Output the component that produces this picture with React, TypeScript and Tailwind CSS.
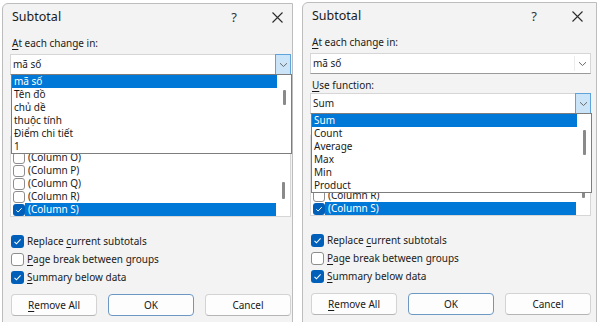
import React from "react";

const FONT = "font-['Noto_Sans',sans-serif]";

function Chevron() {
  return (
    <svg width="9" height="6" viewBox="0 0 9 6">
      <path d="M1 1.2l3.5 3.3L8 1.2" stroke="#6b6b6b" fill="none" strokeWidth="1" />
    </svg>
  );
}

function CloseIcon() {
  return (
    <svg width="11" height="11" viewBox="0 0 11 11">
      <path d="M0.5 0.5l10 10M10.5 0.5l-10 10" stroke="#2b2b2b" strokeWidth="1.1" />
    </svg>
  );
}

function Check({ size = 13 }: { size?: number }) {
  return (
    <svg width={size - 4} height={size - 4} viewBox="0 0 9 9">
      <path d="M1.5 4.8l2 2L7.6 2.4" stroke="#fff" fill="none" strokeWidth="1.1" />
    </svg>
  );
}

function Box({ checked, small }: { checked?: boolean; small?: boolean }) {
  const size = small ? "w-[12px] h-[12px]" : "w-[13px] h-[13px]";
  return checked ? (
    <span className={`${size} shrink-0 rounded-[3px] bg-[#005fb8] flex items-center justify-center`}>
      <Check size={small ? 12 : 13} />
    </span>
  ) : (
    <span className={`${size} shrink-0 rounded-[3px] bg-white border border-[#8d8d8d]`} />
  );
}

function DropList({ items, thumbTop, thumbH }: { items: string[]; thumbTop: string; thumbH: string }) {
  return (
    <div className="absolute top-full left-0 z-10 w-[281px] h-[80px] bg-white border border-[#7d7d7d] flex">
      <div className="w-[265px] flex flex-col">
        {items.map((it, i) => (
          <div
            key={it}
            className={`h-[13px] leading-[13px] pl-[2px] text-[10px] ${
              i === 0 ? "bg-[#0078d7] text-white" : "text-[#1a1a1a]"
            }`}
          >
            {it}
          </div>
        ))}
      </div>
      <div className={`flex-1 pl-[6px] ${thumbTop}`}>
        <div className={`w-[3px] ${thumbH} rounded-[1px] bg-[#8a8a8a]`} />
      </div>
    </div>
  );
}

function Combo({
  value,
  open,
  hidden,
  list,
}: {
  value: string;
  open?: boolean;
  hidden?: boolean;
  list?: React.ReactNode;
}) {
  return (
    <div className={`relative w-[281px] h-[21px] bg-white border border-[#d6d6d6] border-b-[#9a9a9a] flex ${hidden ? "invisible" : ""}`}>
      <div className="flex-1 pl-[2px] leading-[19px] text-[10px] text-[#1a1a1a]">{value}</div>
      {open ? (
        <div className="w-[16px] -my-px -mr-px bg-[#cce4f7] border border-[#5ea3dc] flex items-center justify-center">
          <Chevron />
        </div>
      ) : (
        <div className="w-[16px] my-[2px] border-l border-[#ececec] flex items-center justify-center">
          <Chevron />
        </div>
      )}
      {list}
    </div>
  );
}

const columns = ["(Column O)", "(Column P)", "(Column Q)", "(Column R)", "(Column S)"];

function Dialog({ width, shift, openFirst }: { width: string; shift: string; openFirst: boolean }) {
  // rows of the column list that sit under the open drop-down are not drawn
  const coveredRows = openFirst ? 0 : 3;
  return (
    <div className={`${width} ${shift} h-[330px] shrink-0 overflow-hidden bg-[#f3f3f3] border border-[#bdbdbd] rounded-tl-[6px]`}>
      <div className="w-[293px] flex flex-col pl-[7px]">
        {/* title bar */}
        <div className="h-[27px] -ml-[7px] pl-[9px] flex items-center">
          <span className="flex-1 text-[12.5px] text-[#1a1a1a]">Subtotal</span>
          <span className="w-[30px] text-center text-[13px] text-[#333]">?</span>
          <span className="w-[30px] ml-[13px] mr-[4px] flex justify-center">
            <CloseIcon />
          </span>
        </div>

        <div className="mt-[5px] h-[14px] leading-[14px] text-[10px] text-[#1a1a1a] pl-[2px]">
          <span className="underline underline-offset-2">A</span>t each change in:
        </div>
        <div className="mt-[4px] relative z-10">
          <Combo
            value="mã số"
            open={openFirst}
            list={
              openFirst ? (
                <DropList
                  items={["mã số", "Tên đồ", "chủ dề", "thuộc tính", "Điểm chi tiết", "1"]}
                  thumbTop="pt-[15px]"
                  thumbH="h-[15px]"
                />
              ) : null
            }
          />
        </div>

        <div
          className={`mt-[4px] h-[14px] leading-[14px] text-[10px] text-[#1a1a1a] pl-[2px] ${
            openFirst ? "invisible" : ""
          }`}
        >
          <span className="underline underline-offset-2">U</span>se function:
        </div>
        <div className="mt-[1px] relative z-10">
          <Combo
            value="Sum"
            open={!openFirst}
            hidden={openFirst}
            list={
              !openFirst ? (
                <DropList
                  items={["Sum", "Count", "Average", "Max", "Min", "Product"]}
                  thumbTop="pt-[16px]"
                  thumbH="h-[25px]"
                />
              ) : null
            }
          />
        </div>

        <div className="mt-[4px] h-[14px] leading-[14px] text-[10px] text-[#1a1a1a] pl-[2px] invisible">
          Add subtotal <span className="underline underline-offset-2">t</span>o:
        </div>
        <div className="mt-[3px] w-[281px] h-[81px] bg-white border border-[#d6d6d6] flex overflow-hidden">
          <div className="w-[265px] flex flex-col justify-end">
            {columns.map((c, i) => {
              const sel = c === "(Column S)";
              return (
                <div
                  key={c}
                  className={`h-[13px] shrink-0 flex items-center pl-[2px] ${i < coveredRows ? "invisible" : ""}`}
                >
                  <Box small checked={sel} />
                  <span
                    className={`flex-1 h-[13px] leading-[13px] pl-[3px] text-[10px] ${
                      sel ? "bg-[#0078d7] text-white" : "text-[#1a1a1a]"
                    }`}
                  >
                    {c}
                  </span>
                </div>
              );
            })}
          </div>
          <div className="flex-1 pl-[6px] pt-[45px]">
            <div className="w-[3px] h-[17px] rounded-[1px] bg-[#8a8a8a]" />
          </div>
        </div>

        <div className="mt-[15px] flex flex-col pl-[1px]">
          {[
            { pre: "Replace ", u: "c", post: "urrent subtotals", on: true },
            { pre: "", u: "P", post: "age break between groups", on: false },
            { pre: "", u: "S", post: "ummary below data", on: true },
          ].map((r) => (
            <div key={r.post} className="h-[18px] flex items-center gap-[3px] text-[10px] text-[#1a1a1a]">
              <Box checked={r.on} />
              <span>
                {r.pre}
                <span className="underline underline-offset-2">{r.u}</span>
                {r.post}
              </span>
            </div>
          ))}
        </div>

        <div className="mt-[8px] flex gap-[11px] pl-[1px] text-[10px] text-[#1a1a1a]">
          <button className="w-[86px] h-[22px] rounded-[4px] bg-[#fdfdfd] border border-[#d3d3d3] border-b-[#b5b5b5]">
            <span className="underline underline-offset-2">R</span>emove All
          </button>
          <button className="w-[86px] h-[22px] rounded-[4px] bg-[#fdfdfd] border border-[#6e98c4]">OK</button>
          <button className="w-[86px] h-[22px] rounded-[4px] bg-[#fdfdfd] border border-[#d3d3d3] border-b-[#b5b5b5]">
            Cancel
          </button>
        </div>
      </div>
    </div>
  );
}

export default function App() {
  return (
    <div className={`w-[600px] h-[322px] overflow-hidden bg-white flex ${FONT}`}>
      <Dialog width="w-[291px]" shift="ml-[2px] mt-[3px]" openFirst />
      <Dialog width="w-[295px]" shift="ml-[9px] mt-[2px]" openFirst={false} />
    </div>
  );
}
